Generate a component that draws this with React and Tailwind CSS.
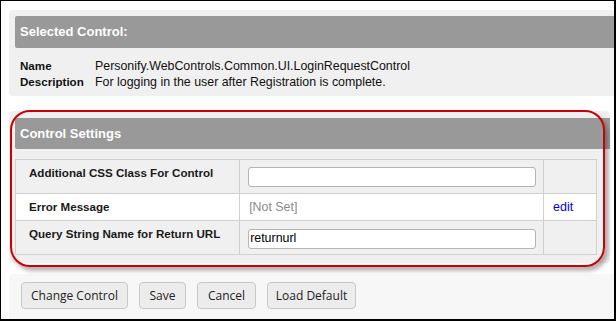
import React from 'react';

const labelCell = "border border-[#d0d0d0] pl-[13px] align-top pt-[6px] text-[11.6px] leading-[14px] font-bold text-[#1a1a1a]";

const buttons = [
    { text: "Change Control", w: "w-[107px]" },
    { text: "Save", w: "w-[47px]" },
    { text: "Cancel", w: "w-[59px]" },
    { text: "Load Default", w: "w-[89px]" },
];

export default function App() {
    return (
        <div
            className="relative w-[616px] h-[321px] overflow-hidden bg-white border-l border-t border-r-2 border-b-2 border-black pl-[8px] pt-[9px]"
            style={{ fontFamily: '"Liberation Sans", Arial, sans-serif' }}
        >
            {/* --- Selected Control --- */}
            <div className="w-[620px] h-[86px] bg-[#f0f0f0] rounded-[4px] pl-[6px] pt-[6px]">
                <div className="h-[32px] bg-[#999999] rounded-l-[2px] flex items-center pl-[5px]">
                    <span className="text-white font-bold text-[13px]">Selected Control:</span>
                </div>
                <div className="pl-[5px] pt-[10px] text-[12.4px] leading-[16px] text-[#111]">
                    <div className="flex">
                        <span className="w-[75px] font-bold text-[11.6px]">Name</span>
                        <span>Personify.WebControls.Common.UI.LoginRequestControl</span>
                    </div>
                    <div className="flex">
                        <span className="w-[75px] font-bold text-[11.6px]">Description</span>
                        <span>For logging in the user after Registration is complete.</span>
                    </div>
                </div>
            </div>

            {/* --- Control Settings --- */}
            <div className="mt-[15px] w-[601px] h-[152px] bg-[#f0f0f0] rounded-[4px] pl-[6px] pt-[7px]">
                <div className="h-[31px] bg-[#999999] rounded-l-[2px] flex items-center pl-[5px]">
                    <span className="text-white font-bold text-[13px]">Control Settings</span>
                </div>
                <table className="mt-[10px] w-[582px] border-collapse">
                    <colgroup>
                        <col className="w-[225px]" />
                        <col className="w-[304px]" />
                        <col className="w-[53px]" />
                    </colgroup>
                    <tbody>
                        <tr className="h-[34px]">
                            <td className={labelCell}>Additional CSS Class For Control</td>
                            <td className="border border-[#d0d0d0] pl-[8px]">
                                <div className="w-[288px] h-[20px] mt-[1px] bg-white border border-[#b5b5b5] rounded-[3px]" />
                            </td>
                            <td className="border border-[#d0d0d0]" />
                        </tr>
                        <tr className="h-[27px] bg-white">
                            <td className="border border-[#d0d0d0] pl-[13px] text-[11.6px] font-bold text-[#1a1a1a]">Error Message</td>
                            <td className="border border-[#d0d0d0] pl-[9px] text-[12.4px] text-[#8a8a8a]">[Not Set]</td>
                            <td className="border border-[#d0d0d0] pl-[9px] text-[12.4px] text-[#0000ee]">edit</td>
                        </tr>
                        <tr className="h-[34px]">
                            <td className={labelCell}>Query String Name for Return URL</td>
                            <td className="border border-[#d0d0d0] pl-[8px]">
                                <div className="w-[288px] h-[20px] mt-[2px] bg-white border border-[#b5b5b5] rounded-[3px] flex items-center pl-[1px] text-[12.4px] text-black">
                                    returnurl
                                </div>
                            </td>
                            <td className="border border-[#d0d0d0]" />
                        </tr>
                    </tbody>
                </table>
            </div>

            {/* --- Buttons --- */}
            <div
                className="mt-[11px] w-[620px] h-[46px] bg-[#f7f7f7] rounded-[4px] flex items-start gap-[11px] pl-[12px] pt-[8px]"
                style={{ fontFamily: '"Open Sans", "Noto Sans", sans-serif' }}
            >
                {buttons.map((b) => (
                    <button
                        key={b.text}
                        className={`${b.w} h-[27px] bg-[#ececec] border border-[#c8c8c8] rounded-[4px] text-[12px] text-[#222] flex items-center justify-center`}
                    >
                        {b.text}
                    </button>
                ))}
            </div>

            {/* --- Red annotation --- */}
            <div className="absolute left-[9px] top-[109px] w-[595px] h-[157px] border-2 border-[#cc0000] rounded-[20px] shadow-[3px_4px_4px_rgba(0,0,0,0.3)] pointer-events-none" />
        </div>
    );
}
